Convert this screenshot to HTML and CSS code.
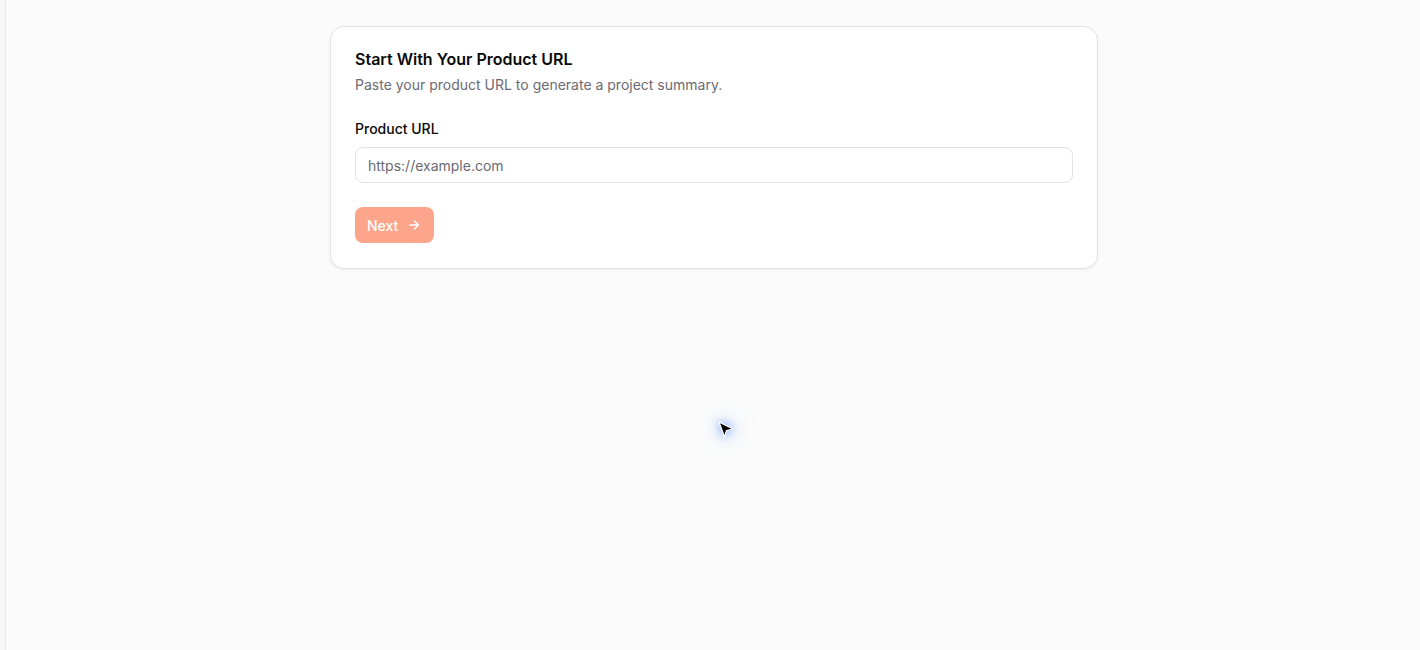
FILE: index.html
```html
<!DOCTYPE html>
<html lang="en">
<head>
<meta charset="utf-8">
<title>Start With Your Product URL</title>
<link rel="stylesheet" href="styles.css">
</head>
<body>
<div class="app">
  <aside class="rail"></aside>
  <main class="main">
    <section class="card">
      <h1 class="title">Start With Your Product URL</h1>
      <p class="subtitle">Paste your product URL to generate a project summary.</p>
      <label class="label" for="url">Product URL</label>
      <input class="input" id="url" type="text" placeholder="https://example.com">
      <div class="actions">
        <button class="btn" type="button">Next
          <svg class="arrow" viewBox="0 0 16 16" width="14" height="14" fill="none" stroke="currentColor" stroke-width="1.6" stroke-linecap="round" stroke-linejoin="round"><path d="M3 8h10M8.5 3.5 13 8l-4.5 4.5"/></svg>
        </button>
      </div>
    </section>
  </main>
</div>
<div class="cursor">
  <svg viewBox="0 0 20 20" width="20" height="20"><path d="M3 2 L17 9 L10.5 10.5 L8.5 17 Z" fill="#000" stroke="#fff" stroke-width="1.2" stroke-linejoin="round"/></svg>
</div>
</body>
</html>
```

FILE: styles.css
```css
* { box-sizing: border-box; }
html, body { margin: 0; padding: 0; height: 100%; }
body {
  font-family: Inter, "Noto Sans", sans-serif;
  background: #fbfbfb;
  color: #0a0a0a;
  overflow: hidden;
}
.app { display: flex; height: 650px; }
.rail {
  width: 6px;
  flex: none;
  background: #f7f7f7;
  border-right: 1px solid #e9e9e9;
}
.main {
  flex: 1;
  display: flex;
  justify-content: center;
  align-items: flex-start;
  padding-top: 26px;
  padding-left: 2px;
}
.card {
  width: 768px;
  background: #fff;
  border: 1px solid #e2e2e2;
  border-radius: 14px;
  box-shadow: 0 1px 3px rgba(0,0,0,0.06);
  padding: 21px 24px 25px;
  display: flex;
  flex-direction: column;
}
.title {
  margin: 0;
  font-size: 16px;
  line-height: 22px;
  font-weight: 600;
  color: #0a0a0a;
}
.subtitle {
  margin: 5px 0 0;
  font-size: 14px;
  line-height: 20px;
  color: #6b6b73;
}
.label {
  margin-top: 24px;
  font-size: 14px;
  line-height: 20px;
  font-weight: 500;
  color: #0a0a0a;
}
.input {
  margin-top: 8px;
  height: 36px;
  border: 1px solid #e3e3e6;
  border-radius: 8px;
  padding: 0 12px;
  font-family: inherit;
  font-size: 14px;
  color: #0a0a0a;
  background: #fff;
  outline: none;
}
.input::placeholder { color: #6b6b73; }
.actions { margin-top: 24px; display: flex; }
.btn {
  height: 36px;
  display: inline-flex;
  align-items: center;
  gap: 9px;
  padding: 0 13px 0 12px;
  border: none;
  border-radius: 8px;
  background: #fda58a;
  color: #fff;
  font-family: inherit;
  font-size: 14px;
  font-weight: 500;
}
.arrow { display: block; }
.cursor {
  position: absolute;
  left: 716px;
  top: 420px;
  width: 20px;
  height: 20px;
  filter: drop-shadow(0 0 5px rgba(70,140,255,0.8)) drop-shadow(0 0 10px rgba(120,170,255,0.5));
}
.cursor svg { display: block; }
```
